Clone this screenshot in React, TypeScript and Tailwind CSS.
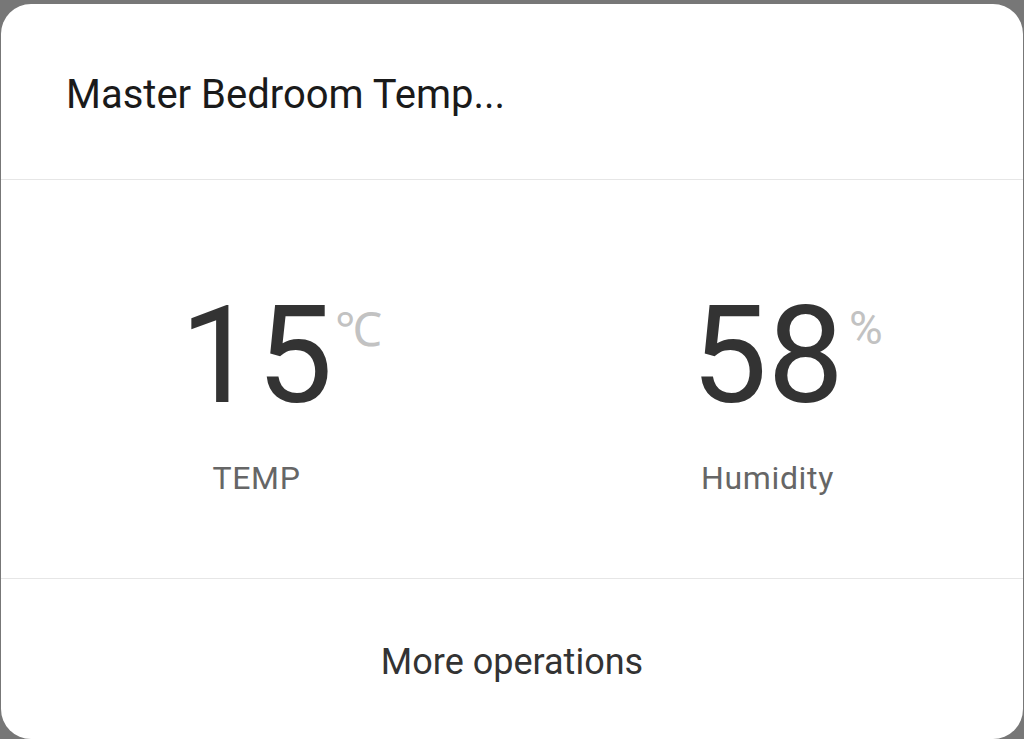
export default function App() {
  return (
    <div
      className="w-[1024px] h-[739px] bg-[#777777] pt-[4px] px-[1px] overflow-hidden"
      style={{ fontFamily: 'Roboto, "Noto Sans", sans-serif' }}
    >
      <div className="h-[735px] bg-white rounded-[30px] flex flex-col">
        <div className="h-[176px] border-b border-[#e6e6e6] flex items-center px-[65px] pt-[6px]">
          <h1 className="text-[40px] text-[#1a1a1a] leading-none">Master Bedroom Temp...</h1>
        </div>

        <div className="h-[399px] border-b border-[#e6e6e6] grid grid-cols-2">
          <div className="flex flex-col items-center pt-[108px]">
            <div className="relative">
              <span className="text-[136px] leading-none text-[#333333]">15</span>
              <span className="absolute left-full top-[18px] ml-[2px] text-[47px] leading-none text-[#c2c2c2]">℃</span>
            </div>
            <span className="mt-[38px] text-[32px] tracking-[0.02em] text-[#666666] leading-none">TEMP</span>
          </div>
          <div className="flex flex-col items-center pt-[108px]">
            <div className="relative">
              <span className="text-[136px] leading-none text-[#333333]">58</span>
              <span className="absolute left-full top-[17px] ml-[5px] text-[46px] leading-none text-[#c2c2c2]">%</span>
            </div>
            <span className="mt-[38px] text-[32px] tracking-[0.02em] text-[#666666] leading-none">Humidity</span>
          </div>
        </div>

        <div className="flex-1 flex items-center justify-center pt-[6px]">
          <span className="text-[36px] text-[#333333] leading-none">More operations</span>
        </div>
      </div>
    </div>
  )
}
